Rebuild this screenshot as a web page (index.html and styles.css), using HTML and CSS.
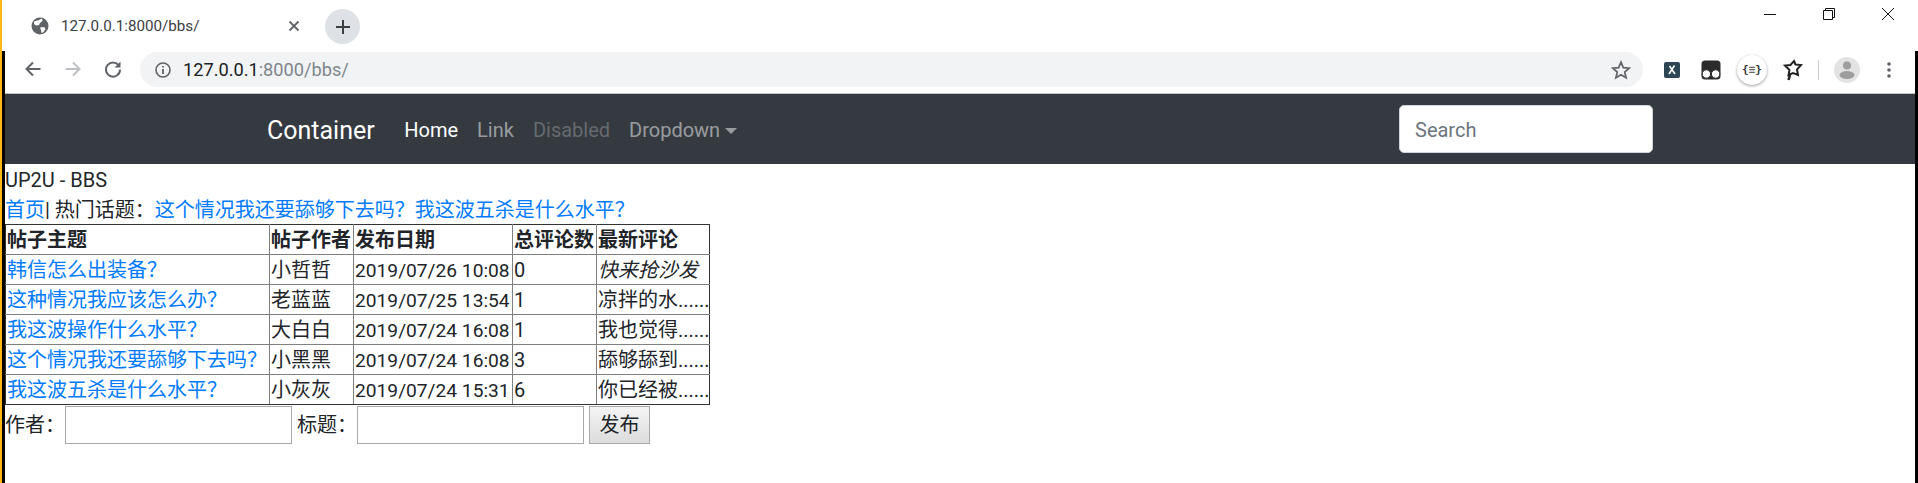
FILE: index.html
```html
<!DOCTYPE html>
<html>
	<head>
		<title>UP2U - BBS</title>
		<link rel="stylesheet" href="styles.css">
	</head>
	<body>
		<div class="tabstrip">
			<div class="tab">
				<svg class="tab-globe" width="18" height="18" viewBox="0 0 18 18"><circle cx="9" cy="9" r="8.5" fill="#5f6368"/><path d="M3 4.5 L8 3 L11 1.5 L11.5 4 L9 6 L8 8 L5 8.5 L3 7z M9 10.5 L13 10 L14.5 12 L12.5 15 L10.5 16 L10 13z" fill="#fff"/></svg>
				<span class="tab-title">127.0.0.1:8000/bbs/</span>
				<svg class="tab-close" width="12" height="12" viewBox="0 0 12 12"><path d="M1.5 1.5 L10.5 10.5 M10.5 1.5 L1.5 10.5" stroke="#5f6368" stroke-width="1.8"/></svg>
			</div>
			<div class="newtab">
				<svg width="16" height="16" viewBox="0 0 16 16"><path d="M8 1 V15 M1 8 H15" stroke="#3c4043" stroke-width="2"/></svg>
			</div>
			<div class="winctl">
				<svg width="14" height="14" viewBox="0 0 14 14"><path d="M1 7.5 H13" stroke="#111" stroke-width="1"/></svg>
				<svg width="14" height="14" viewBox="0 0 14 14" fill="none"><path d="M1.5 3.5 H10.5 V12.5 H1.5z M3.5 3.5 V1.5 H12.5 V10.5 H10.5" stroke="#111" stroke-width="1"/></svg>
				<svg width="14" height="14" viewBox="0 0 14 14"><path d="M1 1 L13 13 M13 1 L1 13" stroke="#111" stroke-width="1"/></svg>
			</div>
		</div>
		<div class="window">
			<div class="toolbar">
				<div class="navbtns">
					<svg width="18" height="18" viewBox="0 0 18 18" fill="none"><path d="M16.5 9 H2.5 M9 2.5 L2.5 9 L9 15.5" stroke="#5f6368" stroke-width="2"/></svg>
					<svg width="18" height="18" viewBox="0 0 18 18" fill="none"><path d="M1.5 9 H15.5 M9 2.5 L15.5 9 L9 15.5" stroke="#bdc1c6" stroke-width="2"/></svg>
					<svg width="18" height="18" viewBox="0 0 18 18" fill="none"><path d="M15 6 A7 7 0 1 0 16 9.5" stroke="#5f6368" stroke-width="2"/><path d="M16.5 1.5 V7.5 H10.5z" fill="#5f6368"/></svg>
				</div>
				<div class="omnibox">
					<svg width="16" height="16" viewBox="0 0 16 16" fill="none"><circle cx="8" cy="8" r="7" stroke="#5f6368" stroke-width="1.6"/><path d="M8 7 V12 M8 4 V5.6" stroke="#5f6368" stroke-width="1.8"/></svg>
					<span class="url"><span class="url-host">127.0.0.1</span>:8000/bbs/</span>
					<svg class="star" width="20" height="20" viewBox="0 0 20 20" fill="none"><path d="M10 2.2 L12.3 7.6 L18.2 8.1 L13.7 12 L15.1 17.8 L10 14.7 L4.9 17.8 L6.3 12 L1.8 8.1 L7.7 7.6z" stroke="#5f6368" stroke-width="1.7"/></svg>
				</div>
				<div class="extensions">
					<svg class="ext-x" width="16" height="16" viewBox="0 0 16 16"><rect width="16" height="16" rx="2" fill="#2e4654"/><path d="M5 12 L10.5 3.5 M5.5 4 L11 12" stroke="#fff" stroke-width="1.6"/></svg>
					<svg class="ext-glasses" width="20" height="20" viewBox="0 0 20 20"><rect x="0.5" y="0.5" width="19" height="19" rx="3.5" fill="#2b2b2b"/><circle cx="5.4" cy="14" r="4.2" fill="#fff" stroke="#2b2b2b"/><circle cx="14.6" cy="14" r="4.2" fill="#fff" stroke="#2b2b2b"/></svg>
					<div class="ext-json">{<span class="ext-json-mid">≡</span>}</div>
					<svg class="ext-star" width="20" height="22" viewBox="0 0 20 22" fill="none"><path d="M11 2 L12.5 5.5 L18 6 L14 10.5 L15 16 L10 14 L5.5 16 L6.5 11 L2 6.5 L7.5 6z" stroke="#222" stroke-width="2"/><path d="M7 16 L5.5 21" stroke="#222" stroke-width="2.5"/></svg>
					<div class="ext-sep"></div>
					<svg class="ext-avatar" width="26" height="26" viewBox="0 0 26 26"><circle cx="13" cy="13" r="13" fill="#e3e3e3"/><circle cx="13" cy="8.5" r="4" fill="#9e9e9e"/><ellipse cx="13" cy="18" rx="7.5" ry="4" fill="#9e9e9e"/></svg>
					<svg width="6" height="18" viewBox="0 0 6 18"><circle cx="3" cy="3" r="1.8" fill="#5f6368"/><circle cx="3" cy="9" r="1.8" fill="#5f6368"/><circle cx="3" cy="15" r="1.8" fill="#5f6368"/></svg>
				</div>
			</div>
			<nav class="navbar">
				<a class="navbar-brand" href="#">Container</a>
				<ul class="navbar-nav">
					<li><a class="nav-link active" href="#">Home</a></li>
					<li><a class="nav-link" href="#">Link</a></li>
					<li><a class="nav-link disabled" href="#">Disabled</a></li>
					<li><a class="nav-link dropdown-toggle" href="#">Dropdown</a></li>
				</ul>
				<input class="search" type="text" placeholder="Search">
			</nav>
			<div class="content">
				<div class="site-title">UP2U - BBS</div>
				<div class="hot-topics"><a href="#">首页</a>| 热门话题：<a href="#">这个情况我还要舔够下去吗？</a><a href="#">我这波五杀是什么水平？</a></div>
				<table class="posts">
					<colgroup>
						<col class="col-topic">
						<col class="col-author">
						<col class="col-date">
						<col class="col-count">
						<col class="col-latest">
					</colgroup>
					<tr>
						<th>帖子主题</th>
						<th>帖子作者</th>
						<th>发布日期</th>
						<th>总评论数</th>
						<th>最新评论</th>
					</tr>
					<tr>
						<td><a href="#">韩信怎么出装备？</a></td>
						<td>小哲哲</td>
						<td class="date">2019/07/26 10:08</td>
						<td>0</td>
						<td><em>快来抢沙发</em></td>
					</tr>
					<tr>
						<td><a href="#">这种情况我应该怎么办？</a></td>
						<td>老蓝蓝</td>
						<td class="date">2019/07/25 13:54</td>
						<td>1</td>
						<td>凉拌的水......</td>
					</tr>
					<tr>
						<td><a href="#">我这波操作什么水平？</a></td>
						<td>大白白</td>
						<td class="date">2019/07/24 16:08</td>
						<td>1</td>
						<td>我也觉得......</td>
					</tr>
					<tr>
						<td><a href="#">这个情况我还要舔够下去吗？</a></td>
						<td>小黑黑</td>
						<td class="date">2019/07/24 16:08</td>
						<td>3</td>
						<td>舔够舔到......</td>
					</tr>
					<tr>
						<td><a href="#">我这波五杀是什么水平？</a></td>
						<td>小灰灰</td>
						<td class="date">2019/07/24 15:31</td>
						<td>6</td>
						<td>你已经被......</td>
					</tr>
				</table>
				<form class="post-form" action="">
					<label>作者：</label>
					<input type="text">
					<label>标题：</label>
					<input type="text">
					<button type="button">发布</button>
				</form>
			</div>
		</div>
	</body>
</html>
```

FILE: styles.css
```css
* {
	box-sizing: border-box;
}
html, body {
	height: 100%;
}
body {
	margin: 0;
	display: flex;
	flex-direction: column;
	border-left: 2px solid #fdb813;
	background: #fff;
	color: #212529;
	font-family: Roboto, "Noto Sans CJK SC", sans-serif;
	font-size: 20px;
	line-height: 30px;
	overflow: hidden;
}
a {
	color: #007bff;
	text-decoration: none;
}

/* browser chrome */
.tabstrip {
	height: 51px;
	display: flex;
	align-items: flex-start;
	flex: none;
}
.tab {
	width: 298px;
	height: 51px;
	padding: 0 0 0 29px;
	display: flex;
	align-items: center;
	font-size: 15.2px;
	color: #3c4043;
}
.tab-title {
	margin-left: 12px;
	width: 227px;
	white-space: nowrap;
}
.newtab {
	width: 35px;
	height: 35px;
	margin: 9px 0 0 25px;
	border-radius: 50%;
	background: #dee1e6;
	display: flex;
	align-items: center;
	justify-content: center;
}
.winctl {
	margin-left: auto;
	height: 30px;
	padding: 7px 23px 0 0;
	display: flex;
	gap: 45px;
}
.window {
	flex: 1;
	border-left: 3px solid #000;
	border-right: 3px solid #000;
	display: flex;
	flex-direction: column;
}
.toolbar {
	height: 43px;
	padding-top: 1px;
	border-bottom: 1px solid #c4c4c4;
	display: flex;
	align-items: flex-start;
	flex: none;
}
.navbtns {
	width: 135px;
	padding: 8px 0 0 19px;
	display: flex;
	gap: 22px;
	flex: none;
}
.omnibox {
	width: 1503px;
	height: 35px;
	padding: 0 12px 0 15px;
	background: #f1f3f4;
	border-radius: 18px;
	display: flex;
	align-items: center;
	font-size: 18.2px;
	color: #80868b;
}
.url {
	margin-left: 12px;
}
.url-host {
	color: #202124;
}
.star {
	margin-left: auto;
}
.extensions {
	flex: 1;
	height: 35px;
	padding-left: 21px;
	display: flex;
	align-items: center;
}
.ext-x {
	margin-right: 21px;
}
.ext-glasses {
	margin-right: 16px;
}
.ext-json {
	width: 30px;
	height: 30px;
	margin-right: 16px;
	border-radius: 50%;
	background: #fff;
	box-shadow: 0 1px 3px rgba(0, 0, 0, 0.4);
	font-family: "DejaVu Sans Mono", monospace;
	font-size: 11px;
	font-weight: bold;
	line-height: 30px;
	text-align: center;
	color: #333;
}
.ext-json-mid {
	color: #666;
}
.ext-sep {
	width: 1px;
	height: 20px;
	margin: 0 15px 0 15px;
	background: #ccc;
}
.ext-avatar {
	margin-right: 26px;
}

/* navbar */
.navbar {
	height: 70px;
	padding: 0 0 0 262px;
	background: #343a40;
	display: flex;
	align-items: center;
	flex: none;
}
.navbar-brand {
	margin-right: 20px;
	padding-top: 3px;
	font-size: 25px;
	color: #fff;
}
.navbar-nav {
	margin: 0;
	padding: 0;
	list-style: none;
	display: flex;
}
.nav-link {
	display: block;
	padding: 2px 9.5px 0;
	color: rgba(255, 255, 255, 0.5);
}
.nav-link.active {
	color: #fff;
}
.nav-link.disabled {
	color: rgba(255, 255, 255, 0.25);
}
.dropdown-toggle::after {
	content: "";
	display: inline-block;
	margin-left: 5px;
	vertical-align: 3px;
	border-top: 6px solid;
	border-left: 6px solid transparent;
	border-right: 6px solid transparent;
}
.search {
	width: 254px;
	height: 48px;
	margin-left: auto;
	margin-right: 262px;
	padding: 2px 15px 0;
	border: 1px solid #ced4da;
	border-radius: 5px;
	font: inherit;
	color: #495057;
}
.search::placeholder {
	color: #6c757d;
}

/* page content */
.content {
	flex: 1;
}
.site-title {
	padding-top: 1px;
	margin-bottom: -1px;
}
.hot-topics {
	height: 30px;
	line-height: 32px;
}
.posts {
	width: 704px;
	table-layout: fixed;
	border-collapse: collapse;
	border: 1px solid #333;
}
.col-topic { width: 264px; }
.col-author { width: 84px; }
.col-date { width: 159px; }
.col-count { width: 84px; }
.col-latest { width: 113px; }
.posts th, .posts td {
	height: 30px;
	padding: 2px 1px 0;
	border: 1px solid #808080;
	line-height: 27px;
	text-align: left;
	white-space: nowrap;
	overflow: hidden;
}
.posts tr:first-child th {
	border-top-color: #333;
}
.posts tr:last-child td {
	border-bottom-color: #333;
}
.posts th:first-child, .posts td:first-child {
	border-left-color: #333;
}
.posts th:last-child, .posts td:last-child {
	border-right-color: #333;
}
.posts td.date {
	font-size: 19.2px;
}
.post-form {
	display: flex;
	align-items: center;
	height: 39px;
}
.post-form input {
	width: 227px;
	height: 38px;
	margin: 0 5px 0 0;
	border: 1px solid #a9a9a9;
}
.post-form button {
	width: 61px;
	height: 38px;
	padding: 0;
	border: 1px solid #a9a9a9;
	background: linear-gradient(#f4f4f4, #dcdcdc);
	font: inherit;
	color: #212529;
}
```
